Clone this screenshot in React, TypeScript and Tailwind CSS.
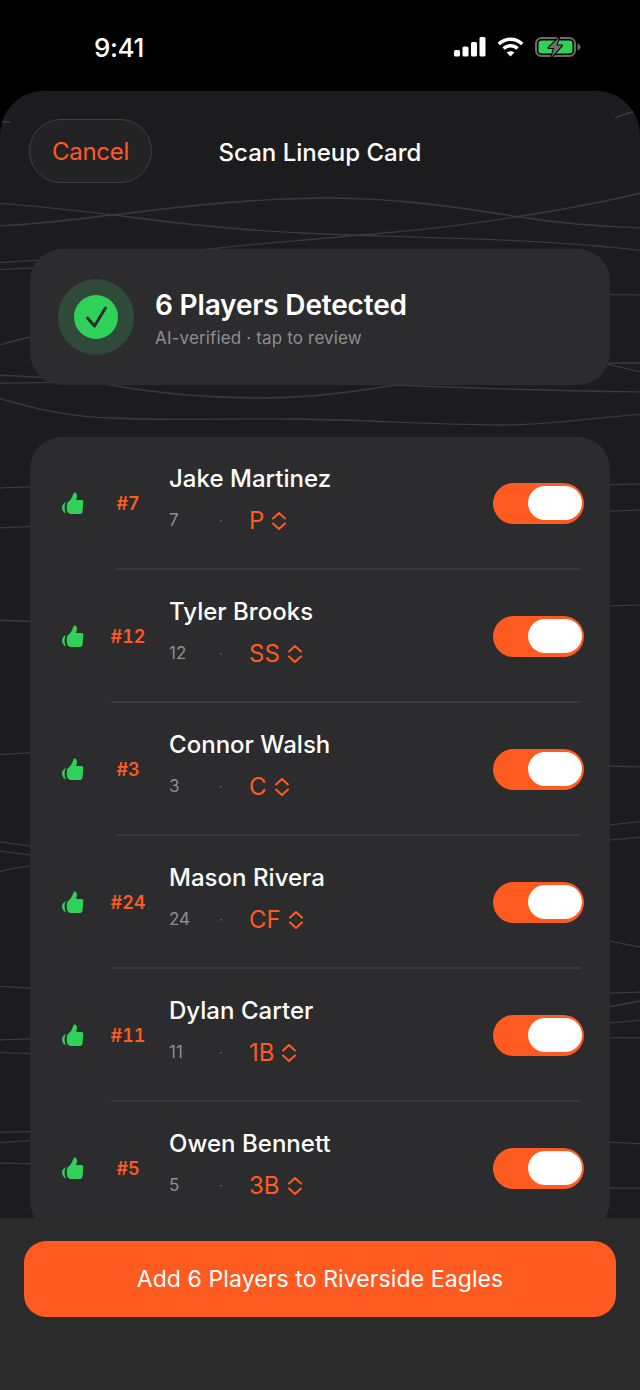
import React from "react";

const players = [
  { tag: "#7", name: "Jake Martinez", num: "7", pos: "P", sep: "ml-[86px]" },
  { tag: "#12", name: "Tyler Brooks", num: "12", pos: "SS", sep: "ml-[81px]" },
  { tag: "#3", name: "Connor Walsh", num: "3", pos: "C", sep: "ml-[86px]" },
  { tag: "#24", name: "Mason Rivera", num: "24", pos: "CF", sep: "ml-[81px]" },
  { tag: "#11", name: "Dylan Carter", num: "11", pos: "1B", sep: "ml-[81px]" },
  { tag: "#5", name: "Owen Bennett", num: "5", pos: "3B", sep: "" },
];

const wavePaths = [
  "M-5 203 C40 206 90 212 130 217 C210 228 280 233 350 235 C450 238 560 240 645 251",
  "M-5 226 C50 224 90 217 130 213 C200 204 270 198 330 198 C400 198 470 209 520 217 C570 225 610 227 645 228",
  "M645 192 C600 203 560 210 515 217 C460 226 410 231 360 235 C310 240 250 244 200 250 C140 256 60 258 -5 263",
  "M-5 270 C60 265 110 268 200 300",
  "M-5 346 C10 342 20 339 40 335 C150 320 300 290 645 295",
  "M-5 375 C40 377 80 379 110 385 C160 394 210 398 260 398 C310 398 360 391 395 385 C470 388 560 391 645 392",
  "M-5 383 C100 384 300 370 600 363 L645 363",
  "M590 360 L645 373",
  "M-5 397 C30 408 70 417 110 418 C170 421 240 418 300 419 C370 420 430 425 500 425 C550 425 600 417 645 414",
  "M640 110 C630 112 625 114 615 118",
  "M-5 122 L10 122",
  "M-5 488 C200 480 400 490 645 484",
  "M-5 528 C200 520 400 518 645 510",
  "M-5 620 C200 630 400 610 645 605",
  "M-5 755 C200 740 400 760 645 767",
  "M-5 841 C100 860 400 850 645 821",
  "M-5 850 C100 870 400 860 645 837",
  "M-5 873 C100 840 400 900 645 948",
  "M-5 986 C200 1000 400 1000 645 992",
  "M-5 1040 C100 1035 400 1050 645 1000",
  "M-5 1052 C100 1060 400 1040 645 1020",
  "M-5 1132 C200 1136 400 1030 645 1038",
  "M-5 1143 C100 1135 400 1130 645 1144",
  "M-5 1163 C200 1165 400 1190 645 1188",
];

function Signal() {
  return (
    <svg width="32" height="20" viewBox="0 0 32 20" fill="#fff">
      <rect x="0" y="13" width="6" height="6.5" rx="1.5" />
      <rect x="8.5" y="9.5" width="6" height="10" rx="1.5" />
      <rect x="17" y="5" width="6" height="14.5" rx="1.5" />
      <rect x="25.5" y="0" width="6" height="19.5" rx="1.5" />
    </svg>
  );
}

function Wifi() {
  return (
    <svg width="27" height="20" viewBox="0 0 27 20" fill="none" stroke="#fff" strokeWidth="3.4">
      <path d="M1.8 7 C8.5 0.6 18.5 0.6 25.2 7" />
      <path d="M6.5 11.6 C10.5 7.8 16.5 7.8 20.5 11.6" />
      <path d="M13.5 19.6 L9.6 15.6 C11.8 13.7 15.2 13.7 17.4 15.6 Z" fill="#fff" stroke="none" />
    </svg>
  );
}

function Battery() {
  return (
    <svg width="46" height="22" viewBox="0 -1 46 22" fill="none">
      <rect x="1" y="1" width="39" height="18" rx="5.5" stroke="#6b6b6b" strokeWidth="2" />
      <rect x="3.5" y="3.5" width="34" height="13" rx="3.2" fill="#30d158" />
      <path d="M42.5 6.5 C44.5 7.2 45.5 8.5 45.5 10 C45.5 11.5 44.5 12.8 42.5 13.5 Z" fill="#6b6b6b" />
      <path d="M24 0.5 L13.5 11 H19 L16.5 20 L27 8.5 H21.5 Z" fill="#6e6e6e" stroke="#000" strokeWidth="2" strokeLinejoin="round" paintOrder="stroke" />
    </svg>
  );
}

function ThumbUp() {
  return (
    <svg width="22" height="22" viewBox="0 0 22 22" fill="#30d158" className="shrink-0">
      <path d="M4 10 C1.5 11 0 13 0 15.5 C0 18 1.5 20.5 4 21.5 C3 19 2.6 17 2.6 15.5 C2.6 13.5 3 12 4 10Z" />
      <path d="M5.5 10.5 C7 9.5 9 7.5 10 5 L12 0.5 C13.5 0 15 1.5 15 3.5 C15 5 14.5 6.5 14 8 L19.5 8 C21 8 21.5 9 21.3 10.5 L20.5 19.5 C20.3 21 19.5 22 18 22 L9 22 C7 22 5.5 20.5 5 18.5 C4.6 16 4.6 13 5.5 10.5Z" />
    </svg>
  );
}

function Chevrons() {
  return (
    <svg width="14" height="18" viewBox="0 0 14 18" fill="none" stroke="#ff5a20" strokeWidth="2" strokeLinecap="round" strokeLinejoin="round">
      <path d="M1 6.5 L7 1 L13 6.5" />
      <path d="M1 11.5 L7 17 L13 11.5" />
    </svg>
  );
}

function Row({ p }: { p: (typeof players)[number] }) {
  return (
    <div className="flex flex-col">
      <div className="flex h-[131px] items-center pt-[1px]">
        <div className="ml-[32px] flex w-[22px] justify-center">
          <ThumbUp />
        </div>
        <div className="ml-[14px] mt-[1px] w-[60px] text-center text-[18px] leading-[20px] font-semibold tabular-nums text-[#ff5a20]">{p.tag}</div>
        <div className="ml-[11px] flex min-w-0 flex-1 flex-col pb-[7px]">
          <div className="text-[24px] leading-[30px] font-medium tracking-[0.03px] text-white">{p.name}</div>
          <div className="mt-[12px] flex h-[30px] items-center">
            <span className="w-[50px] text-[17px] text-[#8e8e93]">{p.num}</span>
            <span className="w-[30px] text-[13px] text-[#6b6b70]">·</span>
            <span className="text-[24px] leading-[30px] text-[#ff5a20]">{p.pos}</span>
            <span className="ml-[8px]"><Chevrons /></span>
          </div>
        </div>
        <div className="mr-[26px] flex h-[41px] w-[91px] items-center justify-end rounded-full bg-[#ff5a20] pr-[2px]">
          <div className="h-[34px] w-[54px] rounded-full bg-white" />
        </div>
      </div>
      {p.sep ? <div className={`h-[2px] mr-[29px] bg-[#3a3a3c] ${p.sep}`} /> : null}
    </div>
  );
}

export default function App() {
  return (
    <div className="flex h-[1390px] w-[640px] flex-col overflow-hidden bg-black font-['Inter',sans-serif] text-white">
      <div className="flex h-[91px] shrink-0 items-start justify-between">
        <div className="ml-[94px] mt-[31px] text-[26px] leading-[34px] font-medium tracking-[-0.4px]">9:41</div>
        <div className="mr-[59px] mt-[36px] flex items-center gap-[11px]">
          <Signal />
          <Wifi />
          <Battery />
        </div>
      </div>

      <div className="relative flex min-h-0 flex-1 flex-col overflow-hidden rounded-t-[44px] bg-[#1c1c1e]">
        <svg className="absolute inset-0" width="640" height="1299" viewBox="0 91 640 1299" fill="none" stroke="#3a3a3c" strokeWidth="1.3">
          {wavePaths.map((d) => (
            <path key={d} d={d} />
          ))}
        </svg>

        <div className="relative flex min-h-0 flex-1 flex-col overflow-hidden">
          <div className="relative flex h-[158px] shrink-0 items-start justify-center">
            <button className="absolute left-[29px] top-[28px] flex h-[64px] w-[123px] items-center justify-center rounded-full border-[1.5px] border-[#404042] bg-[#232325] pt-[2px] text-[24px] tracking-[-0.3px] text-[#ff5a20]">
              Cancel
            </button>
            <div className="mt-[46px] text-[24px] leading-[32px] font-medium">Scan Lineup Card</div>
          </div>

          <div className="mx-[30px] flex h-[136px] shrink-0 items-center rounded-[32px] bg-[#2c2c2e] pl-[28px]">
            <div className="flex h-[76px] w-[76px] items-center justify-center rounded-full bg-[#2f4a38]">
              <div className="flex h-[44px] w-[44px] items-center justify-center rounded-full bg-[#30d158]">
                <svg width="24" height="24" viewBox="0 0 24 24" fill="none" stroke="#2c2c2e" strokeWidth="3" strokeLinecap="round" strokeLinejoin="round">
                  <path d="M3.5 13 L10.5 21 L21.5 3" />
                </svg>
              </div>
            </div>
            <div className="ml-[21px] flex flex-col">
              <div className="mt-[3px] text-[28px] leading-[34px] font-semibold tracking-[-0.17px]">6 Players Detected</div>
              <div className="mt-[5px] text-[17px] leading-[22px] tracking-[0.15px] text-[#8e8e93]">AI-verified · tap to review</div>
            </div>
          </div>

          <div className="mx-[30px] mt-[52px] shrink-0 rounded-[32px] bg-[#2c2c2e]">
            {players.map((p) => (
              <Row key={p.tag} p={p} />
            ))}
          </div>
        </div>

        <div className="relative flex h-[172px] shrink-0 flex-col bg-[#2b2b2c] px-[24px] pt-[23px]">
          <button className="flex h-[76px] w-full items-center justify-center rounded-[22px] bg-[#ff5a20] pt-[1px] text-[23px] tracking-[0.1px] text-white">
            Add 6 Players to Riverside Eagles
          </button>
        </div>
      </div>
    </div>
  );
}
